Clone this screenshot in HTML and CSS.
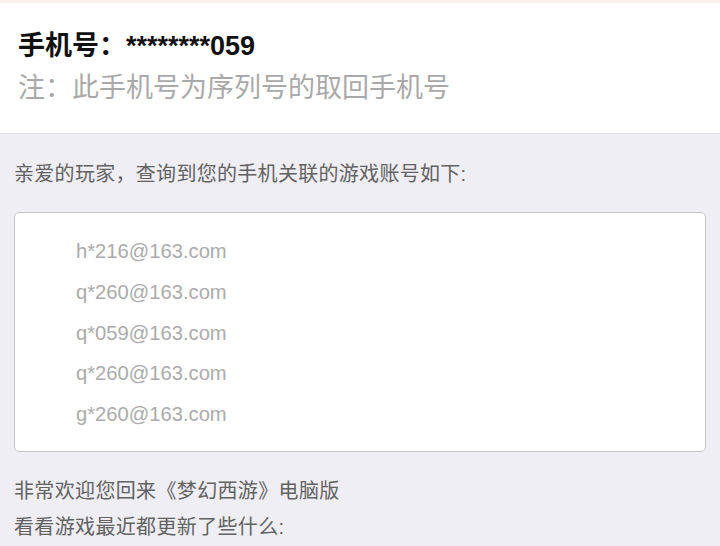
FILE: index.html
```html
<!DOCTYPE html>
<html lang="zh-CN">
<head>
<meta charset="utf-8">
<title>手机号关联账号</title>
<link rel="stylesheet" href="styles.css">
</head>
<body>
<header class="head">
  <div class="phone">手机号：<span class="num">********059</span></div>
  <div class="note">注：此手机号为序列号的取回手机号</div>
</header>
<main class="main">
  <p class="intro">亲爱的玩家，查询到您的手机关联的游戏账号如下:</p>
  <div class="accounts">
    <div class="acct">h*216@163.com</div>
    <div class="acct">q*260@163.com</div>
    <div class="acct">q*059@163.com</div>
    <div class="acct">q*260@163.com</div>
    <div class="acct">g*260@163.com</div>
  </div>
  <p class="text first">非常欢迎您回来《梦幻西游》电脑版</p>
  <p class="text">看看游戏最近都更新了些什么:</p>
</main>
</body>
</html>
```
FILE: styles.css
```css
html, body {
  margin: 0;
  padding: 0;
}
body {
  background: #efeef4;
  font-family: "Liberation Sans", "Noto Sans CJK SC", sans-serif;
  width: 720px;
  height: 546px;
  overflow: hidden;
}
.head {
  background: #ffffff;
  border-top: 3px solid #fdefee;
  border-bottom: 1px solid #e2e2e6;
  padding: 23px 18px 27px;
}
.phone {
  font-size: 27px;
  font-weight: bold;
  line-height: 40px;
  color: #111111;
}
.note {
  font-size: 27px;
  line-height: 40px;
  color: #a9a9a9;
  font-family: "Noto Sans CJK SC", sans-serif;
}
.main {
  padding: 25px 14px 0;
}
.intro {
  margin: 0;
  font-size: 20px;
  line-height: 30px;
  letter-spacing: 0.3px;
  color: #626262;
}
.accounts {
  margin-top: 23px;
  height: 240px;
  box-sizing: border-box;
  background: #ffffff;
  border: 1.5px solid #c6c6c9;
  border-radius: 5px;
  padding: 18px 0 0 61px;
  display: flex;
  flex-direction: column;
}
.acct {
  font-size: 20.2px;
  line-height: 40.75px;
  color: #ababab;
}
.text {
  margin: 0;
  font-size: 20px;
  line-height: 36px;
  letter-spacing: 0.35px;
  color: #626262;
}
.text.first {
  margin-top: 21px;
}
```
